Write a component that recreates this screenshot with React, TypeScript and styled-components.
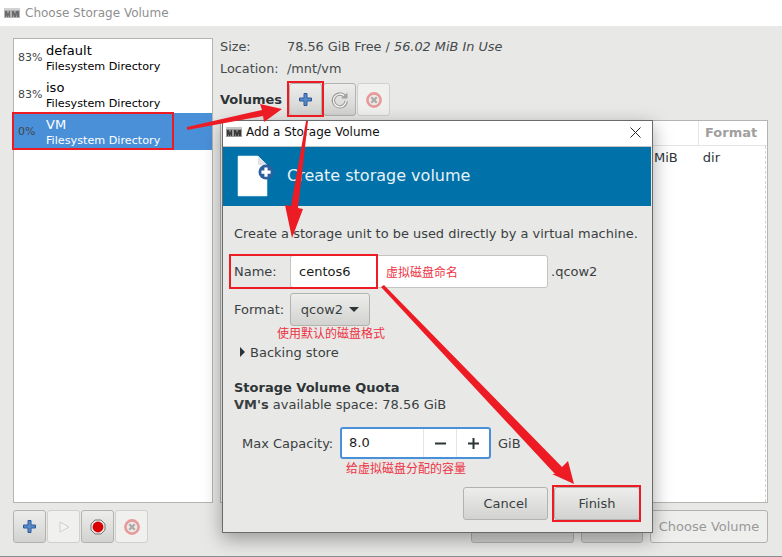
import React from 'react';
import styled, { createGlobalStyle } from 'styled-components';

const GlobalStyle = createGlobalStyle`
  html, body {
    margin: 0;
    padding: 0;
    background: #e8e8e7;
    overflow: hidden;
  }
  * {
    box-sizing: border-box;
  }
`;

const Window = styled.div`
  position: relative;
  width: 782px;
  height: 557px;
  display: flex;
  flex-direction: column;
  background: #e8e8e7;
  border-bottom: 1px solid #8c8c8c;
  font-family: 'DejaVu Sans', sans-serif;
  font-size: 13px;
  color: #2e3436;
  overflow: hidden;
`;

const TitleBar = styled.div`
  flex-shrink: 0;
  display: flex;
  align-items: center;
  gap: 5px;
  height: 26px;
  padding-left: 4px;
  background: #fff;
  color: #8f8f8f;
  font-size: 12px;
`;

const Main = styled.div`
  flex: 1;
  display: flex;
  gap: 7px;
  padding: 12px 14px 13px 13px;
  min-height: 0;
`;

const LeftColumn = styled.div`
  width: 200px;
  flex-shrink: 0;
  display: flex;
  flex-direction: column;
  gap: 7px;
`;

const PoolList = styled.div`
  flex: 1;
  background: #fff;
  border: 1px solid #b4b4b0;
`;

const PoolRow = styled.div<{ $selected?: boolean }>`
  display: flex;
  align-items: center;
  height: 37px;
  background: ${(p) => (p.$selected ? '#4a90d9' : 'transparent')};
  color: ${(p) => (p.$selected ? '#fff' : '#000')};
`;

const PoolPercent = styled.span`
  width: 32px;
  padding-left: 4px;
  font-size: 11px;
  color: #3f4547;
`;

const PoolText = styled.div`
  display: flex;
  flex-direction: column;
`;

const PoolName = styled.span`
  font-size: 13px;
  line-height: 17px;
`;

const PoolKind = styled.span`
  font-size: 11.2px;
  line-height: 15px;
`;

const IconBar = styled.div`
  display: flex;
  gap: 1px;
  height: 33px;
`;

const IconButton = styled.button<{ $disabled?: boolean }>`
  width: 33px;
  height: 33px;
  padding: 0;
  display: flex;
  align-items: center;
  justify-content: center;
  border: 1px solid ${(p) => (p.$disabled ? '#d0d0ce' : '#b2b2ae')};
  border-radius: 3px;
  background: ${(p) =>
    p.$disabled ? '#f0f0ef' : 'linear-gradient(#ededec, #d2d2d0)'};
`;

const RightColumn = styled.div`
  flex: 1;
  min-width: 0;
  display: flex;
  flex-direction: column;
`;

const InfoGrid = styled.div`
  display: flex;
  flex-direction: column;
  gap: 5px;
`;

const InfoRow = styled.div`
  display: flex;
  height: 17px;
  align-items: center;
  color: #454a4c;
  font-size: 12.85px;
`;

const InfoLabel = styled.span`
  width: 67px;
`;

const Italic = styled.i`
  white-space: pre;
`;

const VolumesRow = styled.div`
  display: flex;
  align-items: center;
  gap: 1px;
  height: 33px;
  margin-top: 6px;
`;

const VolumesLabel = styled.b`
  width: 68px;
`;

const VolumeTable = styled.div`
  flex: 1;
  display: flex;
  flex-direction: column;
  margin-top: 4px;
  background: #fff;
  border: 1px solid #b4b4b0;
`;

const TableHead = styled.div`
  display: flex;
  justify-content: flex-end;
  height: 25px;
  border-bottom: 1px solid #e4e4e2;
`;

const HeadCell = styled.div`
  width: 69px;
  padding-left: 6px;
  line-height: 24px;
  font-weight: 700;
  color: #a0a09e;
  border-left: 1px solid #e4e4e2;
`;

const TableBody = styled.div`
  flex: 1;
  display: flex;
  justify-content: flex-end;
  gap: 25px;
  margin-right: 1px;
  padding: 4px 45px 0 0;
  border-right: 1px dashed #d4d4d2;
  color: #2e3436;
`;

const BottomBar = styled.div`
  display: flex;
  justify-content: flex-end;
  gap: 7px;
  margin-top: 7px;
  height: 33px;
`;

const BottomButton = styled.button<{ $width: number; $disabled?: boolean }>`
  width: ${(p) => p.$width}px;
  border: 1px solid #b2b2ae;
  border-radius: 3px;
  background: ${(p) =>
    p.$disabled ? '#eeeeed' : 'linear-gradient(#ededec, #d2d2d0)'};
  font: inherit;
  color: ${(p) => (p.$disabled ? '#999' : '#2e3436')};
`;

const Dialog = styled.div`
  position: absolute;
  left: 222px;
  top: 120px;
  width: 431px;
  height: 413px;
  display: flex;
  flex-direction: column;
  background: #e8e8e7;
  border: 1px solid #6a6a6a;
  box-shadow: 0 6px 18px rgba(0, 0, 0, 0.35);
`;

const DialogTitle = styled.div`
  display: flex;
  align-items: center;
  gap: 4px;
  height: 25px;
  padding: 0 11px 3px 3px;
  background: #fff;
  color: #111;
  font-size: 12px;
`;

const DialogTitleText = styled.span`
  flex: 1;
`;

const Banner = styled.div`
  display: flex;
  align-items: center;
  gap: 13px;
  height: 60px;
  margin-right: 1px;
  padding: 0 0 2px 14px;
  background: #0071a9;
  color: #e8f2f7;
  font-size: 16px;
  border-top: 1px solid #c4c4c4;
`;

const DialogBody = styled.div`
  flex: 1;
  display: flex;
  flex-direction: column;
  padding: 19px 12px 12px 11px;
`;

const Intro = styled.div`
  line-height: 18px;
  color: #3a3f41;
  font-size: 12.94px;
  white-space: nowrap;
`;

const FieldRow = styled.div<{ $top: number }>`
  display: flex;
  align-items: center;
  height: 33px;
  margin-top: ${(p) => p.$top}px;
`;

const FieldLabel = styled.span`
  width: 56px;
  color: #3a3f41;
`;

const NameField = styled.div`
  width: 258px;
  height: 33px;
  display: flex;
  align-items: center;
  padding-left: 8px;
  background: #fff;
  border: 1px solid #c4c4c0;
  border-radius: 3px;
  color: #1c1c1c;
`;

const NameValue = styled.span`
  width: 87px;
`;

const Note = styled.span`
  font-size: 12px;
  color: #ee3344;
  font-family: 'Noto Sans CJK SC', sans-serif;
`;

const Suffix = styled.span`
  margin-left: 3px;
  color: #3a3f41;
`;

const ComboButton = styled.button`
  width: 80px;
  height: 33px;
  display: flex;
  align-items: center;
  justify-content: center;
  gap: 6px;
  padding: 0;
  border: 1px solid #b2b2ae;
  border-radius: 3px;
  background: linear-gradient(#ededec, #d2d2d0);
  font: inherit;
  color: #3a3f41;
`;

const Caret = styled.span`
  width: 0;
  height: 0;
  border-left: 5px solid transparent;
  border-right: 5px solid transparent;
  border-top: 5px solid #2e3436;
`;

const NoteLine = styled.div<{ $indent: number; $height: number }>`
  height: ${(p) => p.$height}px;
  line-height: ${(p) => p.$height}px;
  padding-left: ${(p) => p.$indent}px;
`;

const Expander = styled.div`
  display: flex;
  align-items: center;
  gap: 5px;
  height: 20px;
  padding-left: 6px;
  margin-top: 2px;
  color: #3a3f41;
`;

const ExpanderArrow = styled.span`
  width: 0;
  height: 0;
  border-top: 5px solid transparent;
  border-bottom: 5px solid transparent;
  border-left: 5px solid #2e3436;
`;

const SectionTitle = styled.b`
  margin-top: 17px;
  line-height: 17px;
`;

const Available = styled.div`
  line-height: 17px;
  color: #3a3f41;
`;

const CapacityRow = styled.div`
  display: flex;
  align-items: center;
  height: 32px;
  margin-top: 14px;
  padding-left: 8px;
`;

const CapacityLabel = styled.span`
  width: 98px;
  color: #3a3f41;
`;

const SpinBox = styled.div`
  width: 151px;
  height: 32px;
  display: flex;
  background: #fff;
  border: 2px solid #4a90d9;
  border-radius: 3px;
`;

const SpinValue = styled.span`
  flex: 1;
  line-height: 28px;
  padding-left: 7px;
  color: #1c1c1c;
`;

const SpinStep = styled.span`
  width: 33px;
  display: flex;
  align-items: center;
  justify-content: center;
  border-left: 1px solid #e4e4e2;
`;

const Unit = styled.span`
  margin-left: 7px;
  color: #3a3f41;
`;

const DialogActions = styled.div`
  margin-top: auto;
  display: flex;
  justify-content: flex-end;
  gap: 6px;
`;

const ActionButton = styled.button<{ $width: number }>`
  width: ${(p) => p.$width}px;
  height: 33px;
  border: 1px solid #b2b2ae;
  border-radius: 3px;
  background: linear-gradient(#ededec, #d2d2d0);
  font: inherit;
  color: #3a3f41;
`;

const Annotations = styled.svg`
  position: absolute;
  left: 0;
  top: 0;
  pointer-events: none;
`;

const LogoFrame = styled.svg<{ $muted?: boolean }>`
  flex-shrink: 0;
  opacity: ${(p) => (p.$muted ? 0.75 : 1)};
`;

function VmmLogo({ muted }: { muted?: boolean }) {
  return (
    <LogoFrame $muted={muted} width="16" height="10" viewBox="0 0 16 10">
      <rect width="16" height="10" fill="#9a9a9a" />
      <path d="M1 3h2l1 3 1-3h1v6H5V7L4 9H3L2 7v2H1zM8 3h2l1 3 1-3h3v6h-2V6l-1 3h-2L9 6v3H8z" fill="#3a3a3a" />
      <path d="M0 0h16v2H0z" fill="#c4c4c4" />
    </LogoFrame>
  );
}

function PlusIcon() {
  return (
    <svg width="15" height="15" viewBox="0 0 15 15">
      <path
        d="M6 1.5h3v4.5h4.5v3H9v4.5H6V9H1.5V6H6z"
        fill="#5a8ac6"
        stroke="#2a5a9c"
        strokeWidth="1"
        strokeLinejoin="round"
      />
    </svg>
  );
}

function RefreshIcon() {
  return (
    <svg width="18" height="18" viewBox="0 0 18 18">
      <path
        d="M13.6 5.2A6.4 6.4 0 1 0 15.2 10"
        fill="none"
        stroke="#979795"
        strokeWidth="3.4"
      />
      <path
        d="M13.6 5.2A6.4 6.4 0 1 0 15.2 10"
        fill="none"
        stroke="#f2f2f1"
        strokeWidth="1.4"
      />
      <path d="M10 7.5h6.5V1.5z" fill="#a3a3a1" />
    </svg>
  );
}

function StopIcon() {
  return (
    <svg width="18" height="18" viewBox="0 0 18 18">
      <circle cx="9" cy="9" r="6.6" fill="#eceae8" stroke="#e79a9a" strokeWidth="2.6" />
      <path d="M6.3 6.3l5.4 5.4M11.7 6.3l-5.4 5.4" stroke="#a9a9a9" strokeWidth="2.2" />
    </svg>
  );
}

function PlayIcon() {
  return (
    <svg width="14" height="14" viewBox="0 0 14 14">
      <path d="M3 2l9 5-9 5z" fill="#f4f4f3" stroke="#cfcfcd" />
    </svg>
  );
}

function RecordIcon() {
  return (
    <svg width="16" height="16" viewBox="0 0 16 16">
      <path
        d="M5 1h6l4 4v6l-4 4H5l-4-4V5z"
        fill="#e8e8e8"
        stroke="#777"
      />
      <circle cx="8" cy="8" r="5.4" fill="#d80000" />
    </svg>
  );
}

function DocumentIcon() {
  return (
    <svg width="37" height="42" viewBox="0 0 37 42">
      <path d="M1 1h20l9 9v31H1z" fill="#fff" stroke="#dfe8ee" strokeWidth="0.6" />
      <path d="M21 1l9 9h-9z" fill="#dfe3e6" />
      <circle cx="29" cy="17" r="7.5" fill="#2d5f9e" />
      <path d="M27.4 12.5h3.2v3h3v3.2h-3v3h-3.2v-3h-3v-3.2h3z" fill="#fff" />
    </svg>
  );
}

const RED = '#ed1c24';

function AnnotationLayer() {
  return (
    <Annotations width="782" height="557" viewBox="0 0 782 557">
      <g fill="none" stroke={RED} strokeWidth="2">
        <rect x="13" y="113" width="160" height="36" />
        <rect x="288" y="82" width="35" height="34" />
        <rect x="230" y="255" width="147" height="33" />
        <rect x="553" y="486" width="87" height="35" />
      </g>
      <g fill={RED}>
        <path d="M187 127L262 110L260 104L282 109L264 122L263 116L187 130z" />
        <path d="M306 121L308 121L298 208L303 209L292 238L285 205L291 206z" />
        <path d="M381 287L384 285L562 467L568 461L574 484L552 474L555 474z" />
      </g>
    </Annotations>
  );
}

export default function App() {
  return (
    <>
      <GlobalStyle />
      <Window>
        <TitleBar>
          <VmmLogo muted />
          <span>Choose Storage Volume</span>
        </TitleBar>
        <Main>
          <LeftColumn>
            <PoolList>
              <PoolRow>
                <PoolPercent>83%</PoolPercent>
                <PoolText>
                  <PoolName>default</PoolName>
                  <PoolKind>Filesystem Directory</PoolKind>
                </PoolText>
              </PoolRow>
              <PoolRow>
                <PoolPercent>83%</PoolPercent>
                <PoolText>
                  <PoolName>iso</PoolName>
                  <PoolKind>Filesystem Directory</PoolKind>
                </PoolText>
              </PoolRow>
              <PoolRow $selected>
                <PoolPercent>0%</PoolPercent>
                <PoolText>
                  <PoolName>VM</PoolName>
                  <PoolKind>Filesystem Directory</PoolKind>
                </PoolText>
              </PoolRow>
            </PoolList>
            <IconBar>
              <IconButton><PlusIcon /></IconButton>
              <IconButton $disabled><PlayIcon /></IconButton>
              <IconButton><RecordIcon /></IconButton>
              <IconButton $disabled><StopIcon /></IconButton>
            </IconBar>
          </LeftColumn>
          <RightColumn>
            <InfoGrid>
              <InfoRow>
                <InfoLabel>Size:</InfoLabel>
                <span>78.56 GiB Free / <Italic>56.02 MiB In Use</Italic></span>
              </InfoRow>
              <InfoRow>
                <InfoLabel>Location:</InfoLabel>
                <span>/mnt/vm</span>
              </InfoRow>
            </InfoGrid>
            <VolumesRow>
              <VolumesLabel>Volumes</VolumesLabel>
              <IconButton><PlusIcon /></IconButton>
              <IconButton><RefreshIcon /></IconButton>
              <IconButton $disabled><StopIcon /></IconButton>
            </VolumesRow>
            <VolumeTable>
              <TableHead>
                <HeadCell>Format</HeadCell>
              </TableHead>
              <TableBody>
                <span>MiB</span>
                <span>dir</span>
              </TableBody>
            </VolumeTable>
            <BottomBar>
              <BottomButton $width={103} />
              <BottomButton $width={62} />
              <BottomButton $width={118} $disabled>Choose Volume</BottomButton>
            </BottomBar>
          </RightColumn>
        </Main>
        <Dialog>
          <DialogTitle>
            <VmmLogo />
            <DialogTitleText>Add a Storage Volume</DialogTitleText>
            <svg width="11" height="11" viewBox="0 0 11 11">
              <path d="M0.5 0.5l10 10M10.5 0.5l-10 10" stroke="#222" strokeWidth="1" />
            </svg>
          </DialogTitle>
          <Banner>
            <DocumentIcon />
            <span>Create storage volume</span>
          </Banner>
          <DialogBody>
            <Intro>Create a storage unit to be used directly by a virtual machine.</Intro>
            <FieldRow $top={12}>
              <FieldLabel>Name:</FieldLabel>
              <NameField>
                <NameValue>centos6</NameValue>
                <Note>虚拟磁盘命名</Note>
              </NameField>
              <Suffix>.qcow2</Suffix>
            </FieldRow>
            <FieldRow $top={5}>
              <FieldLabel>Format:</FieldLabel>
              <ComboButton>qcow2 <Caret /></ComboButton>
            </FieldRow>
            <NoteLine $indent={43} $height={14}><Note>使用默认的磁盘格式</Note></NoteLine>
            <Expander>
              <ExpanderArrow />
              <span>Backing store</span>
            </Expander>
            <SectionTitle>Storage Volume Quota</SectionTitle>
            <Available><b>VM's</b> available space: 78.56 GiB</Available>
            <CapacityRow>
              <CapacityLabel>Max Capacity:</CapacityLabel>
              <SpinBox>
                <SpinValue>8.0</SpinValue>
                <SpinStep>
                  <svg width="11" height="11" viewBox="0 0 11 11"><path d="M0 4.5h11v2H0z" fill="#2e3436" /></svg>
                </SpinStep>
                <SpinStep>
                  <svg width="11" height="11" viewBox="0 0 11 11"><path d="M0 4.5h4.5V0h2v4.5H11v2H6.5V11h-2V6.5H0z" fill="#2e3436" /></svg>
                </SpinStep>
              </SpinBox>
              <Unit>GiB</Unit>
            </CapacityRow>
            <NoteLine $indent={112} $height={18}><Note>给虚拟磁盘分配的容量</Note></NoteLine>
            <DialogActions>
              <ActionButton $width={85}>Cancel</ActionButton>
              <ActionButton $width={86}>Finish</ActionButton>
            </DialogActions>
          </DialogBody>
        </Dialog>
        <AnnotationLayer />
      </Window>
    </>
  );
}
